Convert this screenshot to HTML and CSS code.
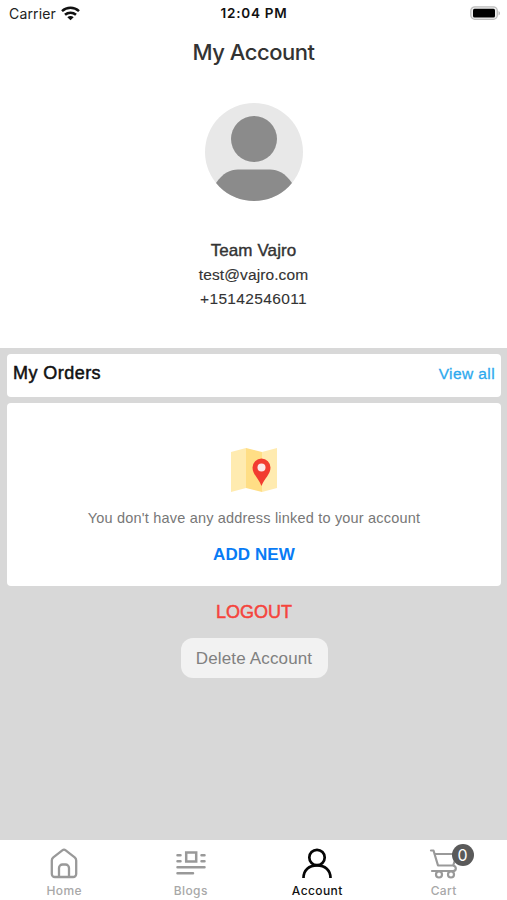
FILE: index.html
```html
<!DOCTYPE html>
<html lang="en">
<head>
<meta charset="utf-8">
<title>My Account</title>
<link rel="stylesheet" href="styles.css">
</head>
<body>
<div class="app">
  <header class="status">
    <div class="carrier"><span>Carrier</span>
      <svg width="19" height="15" viewBox="0 0 19 15" fill="none" stroke="#111" stroke-width="2.500"><path d="M1 5.200C5.800.7 13.200.7 18 5.200M4 8.800c3.200-2.900 7.800-2.900 11 0"/><path d="M9.500 14.300 6.300 11.300c1.800-1.600 4.600-1.600 6.400 0z" fill="#111" stroke="none"/></svg>
    </div>
    <div class="time">12:04 PM</div>
    <div class="battery">
      <svg width="31" height="15" viewBox="0 0 31 15"><rect x=".8" y=".8" width="26.500" height="12.500" rx="4" fill="#eee" stroke="#bdbdbd" stroke-width="1.300"/><rect x="3" y="2.700" width="22" height="8.800" rx="1.500" fill="#000"/><path d="M28.500 5v4.500c2-.8 2-3.700 0-4.500z" fill="#bdbdbd"/></svg>
    </div>
  </header>
  <h1 class="title"><span>My Account</span></h1>
  <section class="profile">
    <svg class="avatar" width="98" height="98" viewBox="0 0 98 98"><defs><clipPath id="disc"><circle cx="49" cy="49" r="49"/></clipPath></defs><g clip-path="url(#disc)"><path fill="#e8e8e8" d="M0 0h98v98H0z"/><circle cx="49" cy="36" r="23" fill="#8b8b8b"/><path d="M11 80C18 70 25 66.500 33 66.500h32c8 0 15 3.500 22 13.500v18H11z" fill="#8b8b8b"/></g></svg>
    <div class="name"><span>Team Vajro</span></div>
    <div class="mail"><span>test@vajro.com</span></div>
    <div class="phone"><span>+15142546011</span></div>
  </section>
  <main class="content">
    <section class="card orders"><h2>My Orders</h2><a class="view">View all</a></section>
    <section class="card address">
      <svg class="map" width="48" height="46" viewBox="0 0 48 46"><path d="M1 5 16 1v40L1 45z" fill="#ffebb0"/><path d="m16 1 16 4v40l-16-4z" fill="#ffde85"/><path d="m32 5 15-4v40l-15 4z" fill="#ffebb0"/><path d="M31.500 39C28.500 31 22.500 27.500 22.500 20.500a9 9 0 0 1 18 0c0 7-6 10.500-9 18.500z" fill="#f23c30"/><circle cx="31.500" cy="20.500" r="4" fill="#fce8e8"/></svg>
      <p class="empty">You don't have any address linked to your account</p>
      <a class="add">ADD NEW</a>
    </section>
    <a class="logout">LOGOUT</a>
    <button class="delete">Delete Account</button>
  </main>
  <nav class="tabs">
    <a class="tab"><svg width="30" height="32" viewBox="0 0 30 32" fill="none" stroke="#999" stroke-width="2.300" stroke-linejoin="round"><path d="M2.800 12.500c0-1.500.5-2.300 1.500-3.200L13.300 2.300a2.800 2.800 0 0 1 3.400 0l9 7c1 .9 1.500 1.700 1.500 3.200V26a3 3 0 0 1-3 3H5.800a3 3 0 0 1-3-3z"/><path d="M10 29v-9a3.500 3.500 0 0 1 3.500-3.500h3A3.500 3.500 0 0 1 20 20v9"/></svg><span>Home</span></a>
    <a class="tab"><svg width="30" height="32" viewBox="0 0 30 32" fill="none" stroke="#999" stroke-width="2.500" stroke-linecap="round"><path d="M10.200 4.500h10v9h-10z"/><path d="M1.500 7.300h3M1.500 13.300h3M25.500 7.300h3M25.500 13.300h3M1.500 19.300h27M1.500 25.200H17"/></svg><span>Blogs</span></a>
    <a class="tab active"><svg width="30" height="32" viewBox="0 0 30 32" fill="none" stroke="#050505" stroke-width="2.700"><circle cx="15" cy="9.500" r="7.700"/><path d="M1.500 30C1.500 22 7 17.400 15 17.400S28.500 22 28.500 30"/></svg><span>Account</span></a>
    <a class="tab cart"><svg width="30" height="32" viewBox="0 0 30 32" fill="none" stroke="#999" stroke-width="2.200" stroke-linejoin="round" stroke-linecap="round"><path d="M2 2.500h2.500L9 17.500h15.200L28 6H6M24 17.500c4 1 3.500 5.500 0 5.500H3"/><circle cx="10" cy="26.500" r="3"/><circle cx="22" cy="26.500" r="3"/></svg><b class="badge">0</b><span>Cart</span></a>
  </nav>
</div>
</body>
</html>
```
FILE: styles.css
```css
* { box-sizing: border-box; }
body { margin: 0; background: #fff; font-family: "Liberation Sans", Arial, sans-serif; color: #333; }
.app { height: 900px; display: flex; flex-direction: column; overflow: hidden; }
h1, h2, p { margin: 0; font-weight: 400; }
.status { height: 28px; padding: 0 6px 2px 9px; display: grid; grid-template-columns: 1fr auto 1fr; align-items: center; font-family: Inter, sans-serif; color: #222; }
.carrier { display: flex; align-items: center; gap: 5px; font-size: 14px; letter-spacing: .15px; }
.time { font-size: 13.500px; font-weight: 600; letter-spacing: .75px; color: #111; margin-right: 3px; }
.time { margin-right: 0; margin-left: -2px; }
.battery { display: flex; justify-content: flex-end; }
.title { height: 48px; line-height: 48px; text-align: center; font-family: Inter, sans-serif; font-size: 22px; font-weight: 500; letter-spacing: -.5px; }
.profile { height: 272px; padding-top: 27px; display: flex; flex-direction: column; align-items: center; line-height: 24px; }
.avatar { margin-bottom: 38px; }
.name { font-size: 17px; letter-spacing: .1px; -webkit-text-stroke: .4px #333; }
.mail { font-size: 15.500px; letter-spacing: .1px; -webkit-text-stroke: .15px #333; }
.phone { font-size: 15.500px; letter-spacing: .35px; -webkit-text-stroke: .1px #333; }
.content { flex: 1; background: #d8d8d8; padding: 6px 6px 0 7px; display: flex; flex-direction: column; align-items: center; }
.card { width: 100%; background: #fff; border-radius: 4px; }
.orders { height: 43px; padding: 0 6px 4px; display: flex; align-items: center; justify-content: space-between; }
.orders h2 { font-size: 18px; letter-spacing: .45px; color: #111; -webkit-text-stroke: .5px #111; }
.view { font-size: 15.500px; letter-spacing: .4px; color: #2da9ee; -webkit-text-stroke: .3px #2da9ee; }
.address { height: 183px; margin-top: 6px; padding-top: 44px; display: flex; flex-direction: column; align-items: center; }
.empty { margin-top: 13px; line-height: 24px; font-size: 14.500px; letter-spacing: .19px; color: #777; }
.add { margin-top: 13px; line-height: 24px; font-size: 17px; letter-spacing: .1px; font-weight: 700; color: #087bf5; }
.logout { margin-top: 14px; line-height: 24px; font-size: 18px; color: #f5443c; -webkit-text-stroke: .5px #f5443c; }
.delete { width: 147px; height: 40px; margin-top: 14px; border: 0; padding: 2px 0 0; border-radius: 12px; background: #f2f2f2; color: #808080; font: 17px "Liberation Sans", Arial, sans-serif; letter-spacing: .15px; }
.tabs { height: 60px; padding-left: 1px; display: grid; grid-template-columns: repeat(4, 1fr); background: #fff; }
.tab { position: relative; display: flex; flex-direction: column; align-items: center; padding-top: 8px; font: 500 12px/16px Inter, sans-serif; letter-spacing: .4px; color: #a8a8a8; }
.tab span { margin-top: 3px; }
.active { color: #111; }
.badge { position: absolute; left: 71px; top: 4px; width: 22px; height: 22px; border-radius: 50%; background: #5a5a5a; color: #fff; font: 16px/22px Inter, sans-serif; letter-spacing: 0; text-align: center; }
```
